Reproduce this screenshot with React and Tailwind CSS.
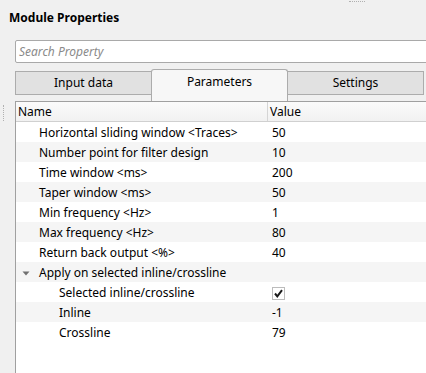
import React from 'react';

const rows = [
  { name: 'Horizontal sliding window <Traces>', value: '50', depth: 0 },
  { name: 'Number point for filter design', value: '10', depth: 0 },
  { name: 'Time window <ms>', value: '200', depth: 0 },
  { name: 'Taper window <ms>', value: '50', depth: 0 },
  { name: 'Min frequency <Hz>', value: '1', depth: 0 },
  { name: 'Max frequency <Hz>', value: '80', depth: 0 },
  { name: 'Return back output <%>', value: '40', depth: 0 },
  { name: 'Apply on selected inline/crossline', value: '', depth: 0, group: true },
  { name: 'Selected inline/crossline', value: 'check', depth: 1 },
  { name: 'Inline', value: '-1', depth: 1 },
  { name: 'Crossline', value: '79', depth: 1 },
];

function Check() {
  return (
    <div className="w-[13px] h-[13px] border border-[#bcbcbc] bg-white flex items-center justify-center">
      <svg width="11" height="11" viewBox="0 0 11 11">
        <path d="M2 5.5 L4.3 8.3 L9 2.2" fill="none" stroke="#1a1a1a" strokeWidth="2" />
      </svg>
    </div>
  );
}

export default function App() {
  return (
    <div
      className="relative w-[426px] h-[373px] bg-[#f0f0f0] overflow-hidden flex flex-col text-[12px] text-black"
      style={{ fontFamily: '"Noto Sans", "Open Sans", sans-serif' }}
    >
      {/* splitter grip */}
      <div className="absolute left-[349px] top-[1px] w-[16px] border-t border-dotted border-[#b0b0b0]" />
      <div className="absolute left-[3px] top-[105px] h-[16px] border-l border-dotted border-[#b0b0b0]" />

      <div className="h-[36px] pl-[9px] pt-[9px] font-bold leading-[18px]">Module Properties</div>

      <div className="ml-[15px] mt-[4px] h-[23px] w-[430px] border border-[#a9a9a9] rounded-[2px] bg-white flex items-center pl-[3px] italic text-[#8a8a8a]">
        Search Property
      </div>

      <div className="ml-[15px] mt-[6px] h-[32px] flex items-start">
        <div className="mt-[2px] w-[137px] h-[24px] border border-[#acacac] bg-[#e1e1e1] flex items-center justify-center">
          Input data
        </div>
        <div className="-ml-[1px] w-[137px] h-[32px] border border-b-0 border-[#acacac] rounded-t-[3px] bg-[#f7f7f7] flex justify-center pt-[3px]">
          Parameters
        </div>
        <div className="-ml-[1px] mt-[2px] w-[137px] h-[24px] border border-[#acacac] bg-[#e1e1e1] flex items-center justify-center">
          Settings
        </div>
      </div>

      <div className="flex-1 ml-[15px] border-l border-t border-[#a0a0a0] bg-white flex flex-col">
        <div className="h-[20px] flex border-b border-[#d0d0d0] bg-gradient-to-b from-[#fbfbfb] to-[#f1f1f1]">
          <div className="w-[252px] border-r border-[#d5d5d5] pl-[2px] pt-[1px] flex items-center">Name</div>
          <div className="pl-[2px] pt-[1px] flex items-center">Value</div>
        </div>
        {rows.map((r, i) => (
          <div
            key={i}
            className={`h-[20px] pt-[2px] flex items-center ${i % 2 === 1 ? 'bg-[#f5f5f5]' : 'bg-white'}`}
          >
            <div className="w-[253px] flex items-center whitespace-nowrap">
              <div className="w-[23px] pl-[6px] flex items-center">
                {r.group && (
                  <svg width="8" height="5" viewBox="0 0 8 5">
                    <path d="M0.5 0.5 H7.5 L4 4.5 Z" fill="#707070" />
                  </svg>
                )}
              </div>
              <span className={r.depth === 1 ? 'pl-[20px]' : ''}>{r.name}</span>
            </div>
            <div className="pl-[3px] flex items-center">
              {r.value === 'check' ? <Check /> : r.value}
            </div>
          </div>
        ))}
      </div>
    </div>
  );
}
